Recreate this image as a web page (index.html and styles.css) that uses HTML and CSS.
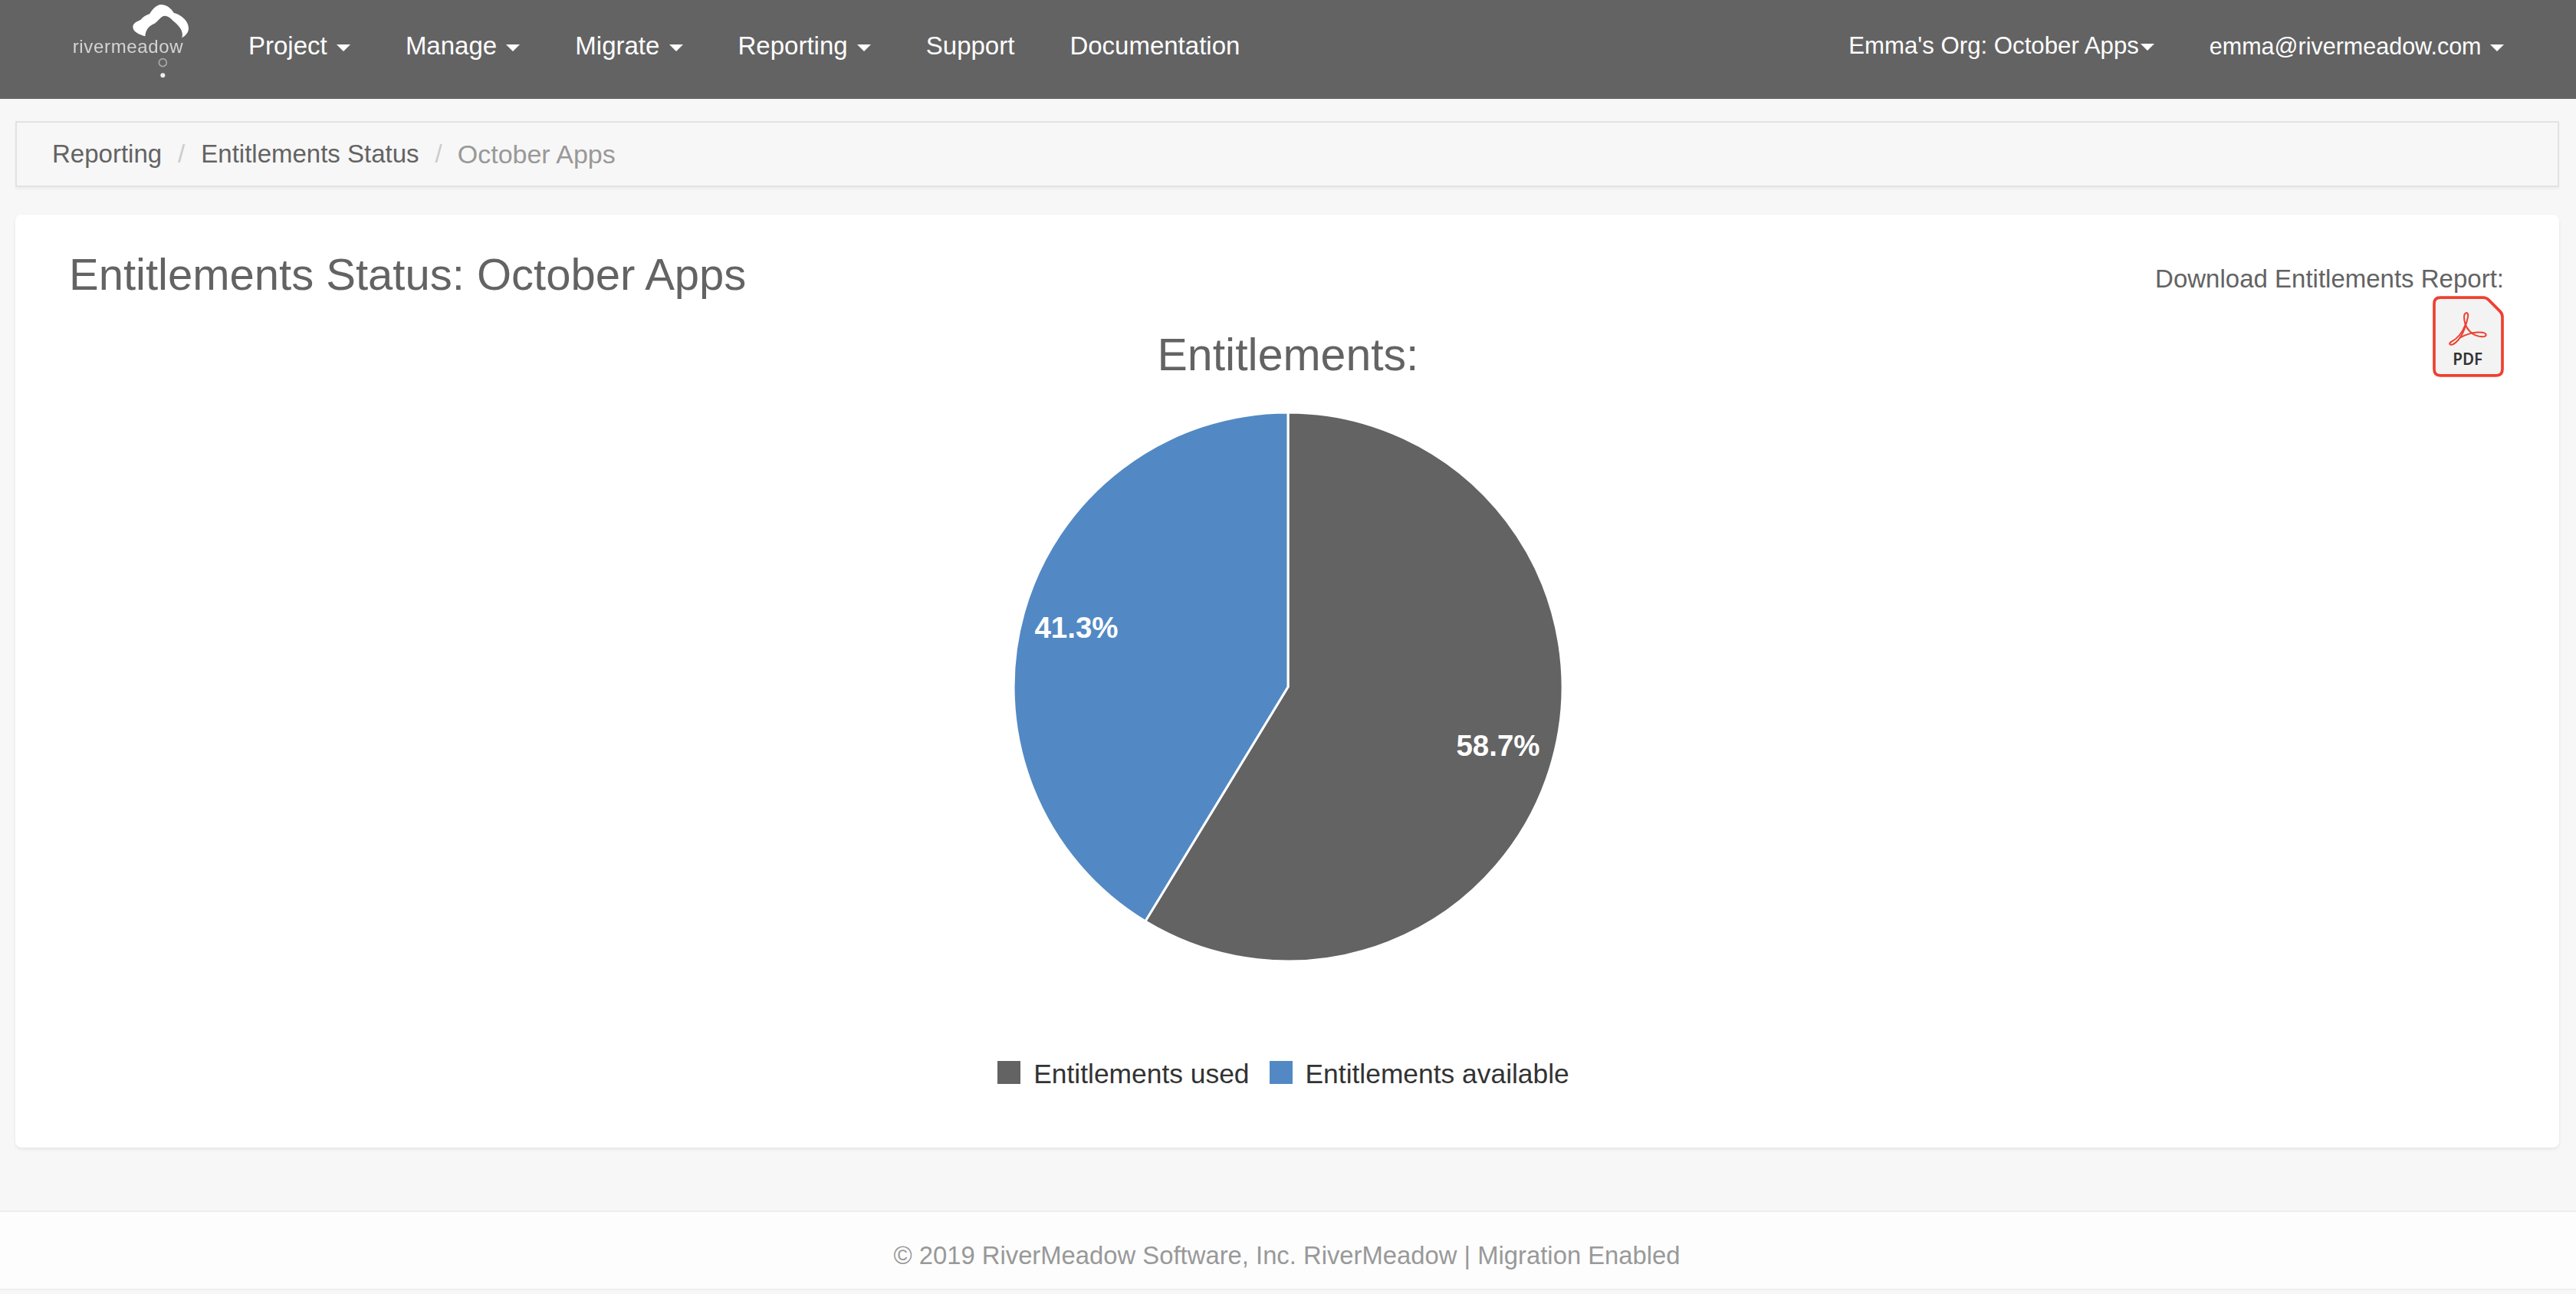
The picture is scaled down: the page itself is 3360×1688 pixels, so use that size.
FILE: index.html
```html
<!DOCTYPE html>
<html lang="en">
<head>
  <meta charset="UTF-8">
  <meta name="viewport" content="width=device-width, initial-scale=1.0">
  <title>Entitlements Status: October Apps</title>
  <link rel="stylesheet" href="styles.css">
</head>
<body>
  <nav class="navbar">
    <a class="brand" href="#">
      <svg class="brand-logo" viewBox="0 0 660 360">
        <path class="cloud" d="M388,142 C365,135 340,125 340,105 C340,92 355,84 370,78 C378,68 392,58 405,55 C415,38 432,18 450,18 C470,18 490,32 500,50 C525,56 558,80 558,110 C558,128 545,140 532,148 C537,130 532,112 505,88 C495,80 482,62 465,62 C450,62 440,82 425,92 C410,98 390,110 388,142 Z"/>
        <text class="brand-name" x="104" y="206" textLength="432">rivermeadow</text>
        <circle class="brand-ring" cx="457" cy="245" r="15"/>
        <circle class="brand-dot" cx="457" cy="295" r="9"/>
      </svg>
    </a>
    <ul class="nav-list">
      <li><a href="#">Project <b class="caret"></b></a></li>
      <li><a href="#">Manage <b class="caret"></b></a></li>
      <li><a href="#">Migrate <b class="caret"></b></a></li>
      <li><a href="#">Reporting <b class="caret"></b></a></li>
      <li><a href="#">Support</a></li>
      <li><a href="#">Documentation</a></li>
    </ul>
    <ul class="nav-list nav-right">
      <li><a href="#">Emma's Org: October Apps<b class="caret caret-tight"></b></a></li>
      <li class="nav-email"><a href="#">emma@rivermeadow.com <b class="caret"></b></a></li>
    </ul>
  </nav>

  <ol class="breadcrumb">
    <li><a href="#">Reporting</a></li>
    <li class="divider">/</li>
    <li><a href="#">Entitlements Status</a></li>
    <li class="divider divider-last">/</li>
    <li class="active">October Apps</li>
  </ol>

  <main class="panel">
    <div>
      <h2 class="page-title">Entitlements Status: October Apps</h2>
    </div>

    <div class="chart">
      <h3 class="chart-title">Entitlements:</h3>
      <svg class="pie" viewBox="0 0 716 716">
        <path class="slice-used" d="M358,358 L358,0 A358,358 0 1 1 171.9,663.8 Z"/>
        <path class="slice-free" d="M358,358 L171.9,663.8 A358,358 0 0 1 358,0 Z"/>
        <text class="pie-label" x="632" y="448">58.7%</text>
        <text class="pie-label" x="82" y="294">41.3%</text>
      </svg>
      <div class="legend">
        <div class="legend-item"><span class="swatch swatch-used"></span>Entitlements used</div>
        <div class="legend-item"><span class="swatch swatch-free"></span>Entitlements available</div>
      </div>
    </div>

    <div class="download">
      <span class="download-label">Download Entitlements Report:</span>
      <a href="#" class="pdf-link">
        <svg class="pdf-icon" viewBox="218 168 279 317">
          <path class="pdf-page" d="M248,174 H415 Q428,174 437,183 L481,227 Q491,237 491,250 V455 Q491,479 467,479 H248 Q224,479 224,455 V198 Q224,174 248,174 Z"/>
          <path class="pdf-mark" d="M349,234 C338,236 340,260 346,280 C332,318 306,340 288,349 C278,358 292,362 303,354 C326,338 344,306 356,250 C358,238 355,233 349,234 Z M346,280 C354,298 366,312 384,321 C402,329 428,330 427,319 C424,306 372,304 322,333"/>
          <text class="pdf-text" x="355" y="439">PDF</text>
        </svg>
      </a>
    </div>
  </main>

  <footer class="footer">© 2019 RiverMeadow Software, Inc. RiverMeadow | Migration Enabled</footer>
</body>
</html>
```

FILE: styles.css
```css
html, body {
  height: 100%;
}

body {
  margin: 0;
  background: #f7f7f7;
  color: #636363;
  font-family: "Liberation Sans", Arial, sans-serif;
  font-size: 33px;
  overflow: hidden;
}

a {
  color: inherit;
  text-decoration: none;
}

/* top bar */
.navbar {
  display: flex;
  align-items: center;
  height: 129px;
  box-sizing: border-box;
  padding: 0 58px 9px 0;
  background: #636363;
  color: #fff;
}

.brand {
  display: block;
  height: 120px;
  margin: 0 8px 0 60px;
}

.brand-logo {
  display: block;
  width: 220px;
  height: 120px;
  filter: blur(0.5px);
}

.cloud {
  fill: #fff;
}

.brand-name {
  fill: #d4d4d4;
  font-family: "Liberation Sans", Arial, sans-serif;
  font-size: 72px;
}

.brand-ring {
  fill: none;
  stroke: #aaa;
  stroke-width: 5;
}

.brand-dot {
  fill: #eee;
}

.nav-list {
  display: flex;
  margin: 0;
  padding: 0;
  list-style: none;
}

.nav-list a {
  display: block;
  padding: 0 36px;
  line-height: 48px;
  white-space: nowrap;
}

.nav-right {
  margin-left: auto;
  font-size: 31.2px;
}

.nav-email {
  font-size: 30.5px;
}

.caret {
  display: inline-block;
  margin-left: 3px;
  vertical-align: middle;
  border-top: 9px solid #fff;
  border-left: 9px solid transparent;
  border-right: 9px solid transparent;
}

.caret-tight {
  margin-left: 2px;
}

/* breadcrumb */
.breadcrumb {
  display: flex;
  align-items: center;
  height: 86px;
  box-sizing: border-box;
  margin: 29px 22px 36px 20px;
  padding: 0 0 0 46px;
  list-style: none;
  background: #f7f7f7;
  border: 2px solid #e2e2e2;
  box-shadow: 0 3px 3px rgba(0, 0, 0, 0.04);
}

.divider {
  margin: 0 21px;
  color: #ccc;
}

.divider-last {
  margin-right: 20px;
}

.active {
  color: #999;
  font-size: 34px;
}

/* main panel */
.panel {
  display: grid;
  grid-template-columns: 1fr 780px 1fr;
  margin: 0 22px 0 20px;
  background: #fff;
  border-radius: 8px;
  box-shadow: 0 2px 4px rgba(0, 0, 0, 0.08);
}

.page-title {
  margin: 46px 0 0 70px;
  font-size: 58px;
  font-weight: normal;
  line-height: 63px;
  white-space: nowrap;
}

.download {
  display: flex;
  flex-direction: column;
  align-items: flex-end;
  padding: 60px 72px 0 0;
}

.download-label {
  line-height: 48px;
  white-space: nowrap;
}

.pdf-link {
  display: block;
  margin-top: -2px;
}

.pdf-icon {
  display: block;
  width: 93px;
  height: 106px;
}

.pdf-page {
  fill: #f3f3f3;
  stroke: #ee4030;
  stroke-width: 11;
}

.pdf-mark {
  fill: none;
  stroke: #ee4030;
  stroke-width: 6;
}

.pdf-text {
  fill: #333;
  font-family: "Noto Sans", sans-serif;
  font-size: 62px;
  font-weight: 600;
  text-anchor: middle;
}

/* chart */
.chart {
  display: flex;
  flex-direction: column;
  align-items: center;
  padding: 150px 0 72px 2px;
}

.chart-title {
  margin: 0 0 42px;
  font-size: 59px;
  font-weight: normal;
  line-height: 66px;
}

.pie {
  display: block;
  width: 716px;
  height: 716px;
}

.slice-used {
  fill: #636363;
  stroke: #fff;
  stroke-width: 3;
}

.slice-free {
  fill: #5289c4;
  stroke: #fff;
  stroke-width: 3;
}

.pie-label {
  fill: #fff;
  font-family: "Liberation Sans", Arial, sans-serif;
  font-size: 38.5px;
  font-weight: bold;
  text-anchor: middle;
}

.legend {
  display: flex;
  gap: 26px;
  margin: 123px 12px 0 0;
  color: #333;
  font-size: 35.4px;
  line-height: 48px;
}

.legend-item {
  display: flex;
  align-items: center;
  white-space: nowrap;
}

.swatch {
  width: 30px;
  height: 30px;
  margin-right: 17px;
  margin-top: -4px;
}

.swatch-used {
  background: #636363;
}

.swatch-free {
  background: #5289c4;
}

/* footer */
.footer {
  height: 104px;
  box-sizing: border-box;
  margin-top: 82px;
  padding-right: 3px;
  background: #fdfdfd;
  border-top: 2px solid #eee;
  border-bottom: 2px solid #eee;
  color: #999;
  font-size: 32.8px;
  line-height: 114px;
  text-align: center;
}
```
